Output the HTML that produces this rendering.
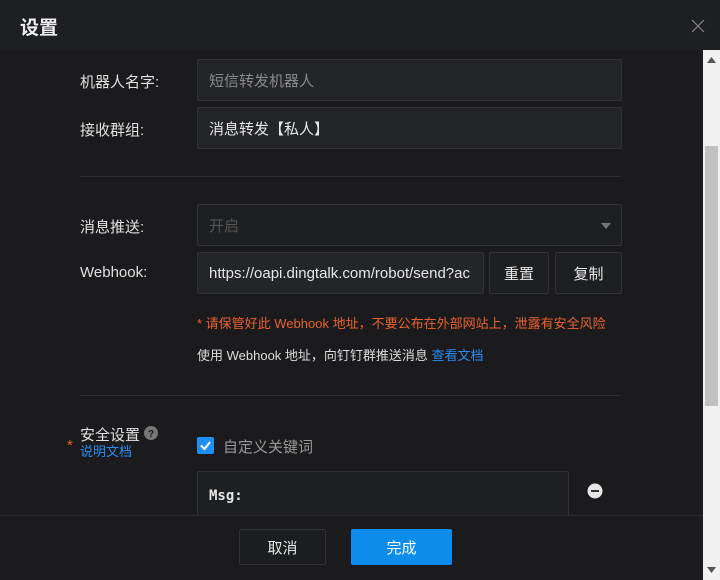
<!DOCTYPE html>
<html><head><meta charset="utf-8"><style>
*{box-sizing:border-box;margin:0;padding:0}
body{width:720px;height:580px;background:#1b1b1d;font-family:"Liberation Sans","Noto Sans CJK SC",sans-serif;color:#ddd;position:relative;overflow:hidden;font-size:15px}
.hdr{position:absolute;left:0;top:0;width:720px;height:50px;background:#1e1f22;}
.hdr .t{position:absolute;left:20px;top:13px;font-size:19px;font-weight:bold;color:#eee}
.hdr .x{position:absolute;left:691px;top:19px;width:14px;height:14px}
.lbl{position:absolute;left:80px;font-size:15px;color:#e0e0e0}
.in{position:absolute;background:#242528;border:1px solid #303135;border-radius:2px;padding-left:11px;display:flex;align-items:center;font-size:15px;color:#e6e6e6}
.hr{position:absolute;left:80px;width:541px;height:1px;background:#2c2d30}
.sb{position:absolute;left:703px;top:50px;width:17px;height:530px;background:#f1f1f1}
.th{position:absolute;left:705px;top:146px;width:13px;height:260px;background:#c1c1c1}
.ft{position:absolute;left:0;top:515px;width:703px;height:65px;background:#1b1b1d;border-top:1px solid #2a2b2e}
.btn{position:absolute;top:529px;height:36px;border-radius:2px;display:flex;align-items:center;justify-content:center;font-size:15px}
</style></head><body>
<div class="hdr"><div class="t">设置</div>
<svg class="x" viewBox="0 0 14 14"><path d="M1 1L13 13M13 1L1 13" stroke="#888" stroke-width="1.2"/></svg></div>

<div class="lbl" style="top:71px">机器人名字:</div>
<div class="in" style="left:197px;top:59px;width:425px;height:42px;color:#8a8a8a">短信转发机器人</div>
<div class="lbl" style="top:119px">接收群组:</div>
<div class="in" style="left:197px;top:107px;width:425px;height:42px">消息转发【私人】</div>
<div class="hr" style="top:176px"></div>

<div class="lbl" style="top:216px">消息推送:</div>
<div class="in" style="left:197px;top:204px;width:425px;height:42px;background:#1e1f21;color:#555">开启
<svg style="position:absolute;right:10px;top:18px" width="10" height="6"><path d="M0 0H10L5 6Z" fill="#777"/></svg></div>
<div class="lbl" style="top:264px">Webhook:</div>
<div class="in" style="left:197px;top:252px;width:287px;height:42px;overflow:hidden;white-space:nowrap">https://oapi.dingtalk.com/robot/send?ac</div>
<div class="in" style="left:489px;top:252px;width:60px;height:42px;padding:0;justify-content:center;background:#1e1f21">重置</div>
<div class="in" style="left:555px;top:252px;width:67px;height:42px;padding:0;justify-content:center;background:#1e1f21">复制</div>
<div style="position:absolute;left:197px;top:313px;font-size:13px;color:#e8622e;white-space:nowrap">* 请保管好此 Webhook 地址，不要公布在外部网站上，泄露有安全风险</div>
<div style="position:absolute;left:197px;top:345px;font-size:13px;color:#ddd;white-space:nowrap">使用 Webhook 地址，向钉钉群推送消息 <span style="color:#2d8cf0">查看文档</span></div>
<div class="hr" style="top:395px"></div>

<div style="position:absolute;left:67px;top:437px;color:#e8622e;font-size:15px">*</div>
<div class="lbl" style="top:424px">安全设置</div>
<svg style="position:absolute;left:144px;top:426px" width="14" height="14"><circle cx="7" cy="7" r="7" fill="#777"/><text x="7" y="11" font-size="10" text-anchor="middle" fill="#1b1b1d" font-weight="bold" font-family="Liberation Sans">?</text></svg>
<div style="position:absolute;left:80px;top:441px;font-size:13px;color:#2d8cf0">说明文档</div>
<div style="position:absolute;left:197px;top:437px;width:17px;height:17px;background:#1e90f5;border-radius:2px"><svg width="17" height="17"><path d="M4 8.5L7.5 12L13 5" stroke="#fff" stroke-width="2" fill="none"/></svg></div>
<div style="position:absolute;left:223px;top:436px;font-size:15px;color:#999">自定义关键词</div>
<div class="in" style="left:197px;top:471px;width:372px;height:50px;background:#1e1f21;font-family:'DejaVu Sans Mono',monospace;font-size:14px;font-weight:bold">Msg:</div>
<svg style="position:absolute;left:587px;top:483px" width="16" height="16"><circle cx="8" cy="8" r="7.5" fill="#e6e6e6"/><rect x="4" y="7" width="8" height="2" fill="#333"/></svg>

<div class="ft"></div>
<div class="btn" style="left:239px;width:87px;border:1px solid #303135;background:#1c1d1f;color:#e6e6e6">取消</div>
<div class="btn" style="left:351px;width:101px;background:#0d8cec;color:#fff">完成</div>

<div class="sb"></div><div class="th"></div>
<svg style="position:absolute;left:707px;top:57px" width="9" height="6"><path d="M0 6H9L4.5 0Z" fill="#555"/></svg>
<svg style="position:absolute;left:707px;top:567px" width="9" height="6"><path d="M0 0H9L4.5 6Z" fill="#555"/></svg>
</body></html>
